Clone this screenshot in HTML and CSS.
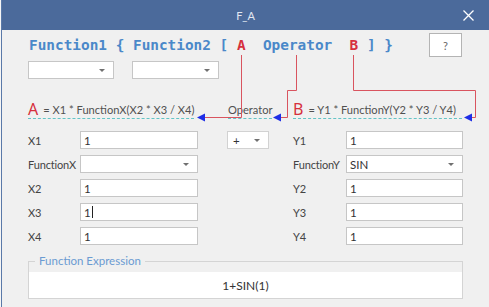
FILE: index.html
```html
<!DOCTYPE html>
<html>
<head>
<meta charset="utf-8">
<link rel="stylesheet" href="styles.css">
</head>
<body>
<div class="window">
  <div class="titlebar">
    <span></span>
    <span class="title">F_A</span>
    <svg class="close" width="11" height="11" viewBox="0 0 11 11"><path d="M0.5 0.5 L10.5 10.5 M10.5 0.5 L0.5 10.5" stroke="#ffffff" stroke-width="1.3" fill="none"/></svg>
  </div>
  <div class="content">
    <div class="heading">
      <div class="syntax">Function1 { Function2 [ <span class="red">A</span>  Operator  <span class="red">B</span> ] }</div>
      <div class="help">?</div>
    </div>
    <div class="combos">
      <div class="combo c1"><span class="val"></span><span class="arrow"></span></div>
      <div class="combo c2"><span class="val"></span><span class="arrow"></span></div>
    </div>
    <div class="formulas">
      <div class="formula fa"><span class="big">A</span><span>= X1 * FunctionX(X2 * X3 / X4)</span></div>
      <div class="formula fop"><span>Operator</span></div>
      <div class="formula fb"><span class="big">B</span><span>= Y1 * FunctionY(Y2 * Y3 / Y4)</span></div>
    </div>
    <div class="form">
      <div class="lbl">X1</div><div class="input">1</div><div class="combo op"><span class="val">+</span><span class="arrow"></span></div><div class="lbl">Y1</div><div class="input">1</div>
      <div class="lbl">FunctionX</div><div class="combo"><span class="val"></span><span class="arrow"></span></div><div></div><div class="lbl">FunctionY</div><div class="combo"><span class="val">SIN</span><span class="arrow"></span></div>
      <div class="lbl">X2</div><div class="input">1</div><div></div><div class="lbl">Y2</div><div class="input">1</div>
      <div class="lbl">X3</div><div class="input">1<span class="caret"></span></div><div></div><div class="lbl">Y3</div><div class="input">1</div>
      <div class="lbl">X4</div><div class="input">1</div><div></div><div class="lbl">Y4</div><div class="input">1</div>
    </div>
    <fieldset class="group">
      <legend>Function Expression</legend>
      <div class="expr">1+SIN(1)</div>
    </fieldset>
  </div>
  <svg class="connectors" width="489" height="307" viewBox="0 0 489 307">
    <g stroke="#d9545f" stroke-width="1" fill="none">
      <path d="M241.5 55 V117.5 H204"/>
      <path d="M296.5 55 V90.5 H287.5 V117.5 H281"/>
      <path d="M353.5 55 V90.5 H475.5 V117.5 H472"/>
    </g>
    <g fill="#1e2ee6">
      <polygon points="197,117.5 205,113.5 205,121.5"/>
      <polygon points="273,117.5 281,113.5 281,121.5"/>
      <polygon points="464,117.5 472,113.5 472,121.5"/>
    </g>
  </svg>
</div>
</body>
</html>
```
FILE: styles.css
```css
html, body {
  margin: 0;
  padding: 0;
  background: #f6f6f6;
}
.window {
  position: relative;
  margin-left: 1px;
  border-left: 1px solid #5a79a8;
  width: 487px;
  height: 307px;
  background: #f0f0f0;
  overflow: hidden;
  font-family: Lato, "Liberation Sans", sans-serif;
  font-size: 11.5px;
  color: #444;
}
.titlebar {
  height: 30px;
  background: #4b6a9b;
  display: grid;
  grid-template-columns: 1fr auto 1fr;
  align-items: center;
}
.title {
  color: #e2e8f2;
  font-size: 11px;
}
.close {
  justify-self: end;
  margin-right: 15px;
}
.content {
  padding: 3px 27px 0 26px;
}
.heading {
  display: flex;
  align-items: center;
  height: 24px;
}
.syntax {
  font-family: "DejaVu Sans Mono", "Liberation Mono", monospace;
  font-weight: bold;
  font-size: 14.4px;
  color: #4a88c9;
  white-space: pre;
  padding-left: 1px;
}
.red {
  color: #d6303d;
}
.help {
  margin-left: auto;
  box-sizing: border-box;
  width: 33px;
  height: 24px;
  background: #fff;
  border: 1px solid #b4b4b4;
  display: flex;
  align-items: center;
  justify-content: center;
  color: #666;
  font-size: 11px;
}
.combos {
  display: flex;
  gap: 18px;
  margin-top: 4px;
}
.combo {
  box-sizing: border-box;
  height: 18px;
  background: #fff;
  border: 1px solid #c6c6c6;
  display: flex;
  align-items: center;
  padding: 0 8px 0 3px;
  color: #333;
}
.combo .val {
  flex: 1;
}
.arrow {
  width: 0;
  height: 0;
  border-left: 3px solid transparent;
  border-right: 3px solid transparent;
  border-top: 3px solid #707070;
}
.c1 { width: 86px; }
.c2 { width: 87px; }
.formulas {
  display: flex;
  margin-top: 21px;
}
.formula {
  box-sizing: border-box;
  height: 19px;
  border-bottom: 1px dashed #63c4c6;
  display: flex;
  align-items: center;
  gap: 5px;
  color: #505050;
  white-space: nowrap;
  font-size: 11.1px;
}
.big {
  color: #d6303d;
  font-size: 16px;
  font-family: "Noto Sans", Lato, sans-serif;
  line-height: 16px;
}
.fa { width: 166px; }
.fop { width: 44px; margin-left: 34px; }
.fb { width: 171px; margin-left: 21px; }
.form {
  display: grid;
  grid-template-columns: 52px 118px 29px 42px 24px 53px 117px;
  grid-auto-rows: 18px;
  row-gap: 6px;
  margin-top: 12px;
  align-items: center;
}
.form > :nth-child(5n+1) { grid-column: 1; }
.form > :nth-child(5n+2) { grid-column: 2; }
.form > :nth-child(5n+3) { grid-column: 4; }
.form > :nth-child(5n+4) { grid-column: 6; }
.form > :nth-child(5n+5) { grid-column: 7; }
.lbl {
  color: #444;
  font-size: 11px;
  letter-spacing: -0.15px;
  white-space: nowrap;
}
.input {
  box-sizing: border-box;
  height: 18px;
  background: #fff;
  border: 1px solid #c6c6c6;
  display: flex;
  align-items: center;
  padding-left: 3px;
  color: #333;
}
.combo.op {
  border-color: #d2d2d2;
  padding-left: 5px;
}
.caret {
  display: inline-block;
  width: 1px;
  height: 12px;
  background: #222;
  margin-left: 1px;
}
.group {
  margin: 8px 0 0 0;
  width: 435px;
  box-sizing: border-box;
  border: 1px solid #d4d4d4;
  padding: 3px 0 0 0;
  min-width: 0;
}
.group legend {
  margin-left: 6px;
  padding: 0 4px;
  color: #6b9bd2;
  font-size: 11.5px;
  line-height: 16px;
}
.expr {
  height: 26px;
  background: #fff;
  display: flex;
  align-items: center;
  justify-content: center;
  color: #333;
  font-size: 12px;
}
.connectors {
  position: absolute;
  left: -2px;
  top: 0;
  pointer-events: none;
}
```
